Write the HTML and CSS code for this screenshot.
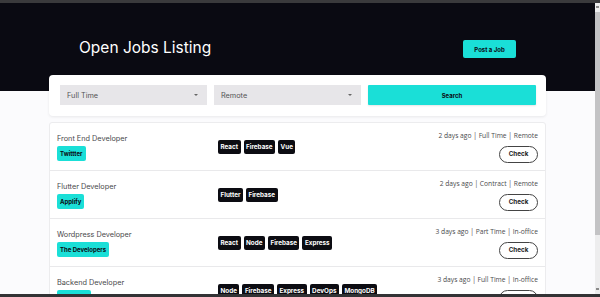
FILE: index.html
```
<!DOCTYPE html>
<html lang="en">
<head>
    <meta charset="UTF-8">
    <meta name="viewport" content="width=device-width, initial-scale=1.0">
    <title>Open Jobs Listing</title>
    <link rel="stylesheet" href="styles.css">
</head>
<body>
    <div class="topbar"></div>
    <div class="window">
        <div class="page">
            <header class="hero">
                <div class="hero-inner">
                    <h1>Open Jobs Listing</h1>
                    <button class="btn-post">Post a Job</button>
                </div>
            </header>

            <main class="content">
                <form class="search-card">
                    <div class="select-wrap">
                        <select>
                            <option>Full Time</option>
                            <option>Part Time</option>
                            <option>Contract</option>
                        </select>
                    </div>
                    <div class="select-wrap">
                        <select>
                            <option>Remote</option>
                            <option>In-office</option>
                        </select>
                    </div>
                    <button type="button" class="btn-search">Search</button>
                </form>

                <ul class="job-list">
                    <li class="job">
                        <div class="job-info">
                            <div class="job-title">Front End Developer</div>
                            <span class="company">Twittter</span>
                        </div>
                        <div class="job-tags">
                            <span class="tag">React</span>
                            <span class="tag">Firebase</span>
                            <span class="tag">Vue</span>
                        </div>
                        <div class="job-meta">
                            <div class="meta-text">2 days ago | Full Time | Remote</div>
                            <button class="btn-check">Check</button>
                        </div>
                    </li>
                    <li class="job">
                        <div class="job-info">
                            <div class="job-title">Flutter Developer</div>
                            <span class="company">Applify</span>
                        </div>
                        <div class="job-tags">
                            <span class="tag">Flutter</span>
                            <span class="tag">Firebase</span>
                        </div>
                        <div class="job-meta">
                            <div class="meta-text">2 days ago | Contract | Remote</div>
                            <button class="btn-check">Check</button>
                        </div>
                    </li>
                    <li class="job">
                        <div class="job-info">
                            <div class="job-title">Wordpress Developer</div>
                            <span class="company">The Developers</span>
                        </div>
                        <div class="job-tags">
                            <span class="tag">React</span>
                            <span class="tag">Node</span>
                            <span class="tag">Firebase</span>
                            <span class="tag">Express</span>
                        </div>
                        <div class="job-meta">
                            <div class="meta-text">3 days ago | Part Time | In-office</div>
                            <button class="btn-check">Check</button>
                        </div>
                    </li>
                    <li class="job">
                        <div class="job-info">
                            <div class="job-title">Backend Developer</div>
                            <span class="company">Microsoft</span>
                        </div>
                        <div class="job-tags">
                            <span class="tag">Node</span>
                            <span class="tag">Firebase</span>
                            <span class="tag">Express</span>
                            <span class="tag">DevOps</span>
                            <span class="tag">MongoDB</span>
                        </div>
                        <div class="job-meta">
                            <div class="meta-text">3 days ago | Full Time | In-office</div>
                            <button class="btn-check">Check</button>
                        </div>
                    </li>
                </ul>
            </main>
        </div>
        <div class="scrollbar">
            <div class="scroll-arrow"></div>
            <div class="scroll-thumb"></div>
            <div class="scroll-track"></div>
            <div class="scroll-arrow"></div>
        </div>
    </div>
    <div class="bottombar"></div>
</body>
</html>
```

FILE: styles.css
```
* {
    box-sizing: border-box;
}
body {
    margin: 0;
    height: 297px;
    overflow: hidden;
    display: flex;
    flex-direction: column;
    font-family: Inter, "Liberation Sans", sans-serif;
    background-color: #3a3a3c;
}
.topbar {
    height: 3px;
    background-color: #3a3a3c;
}
.bottombar {
    height: 3px;
    background-color: #333335;
}
.window {
    flex: 1;
    display: flex;
    min-height: 0;
}
.page {
    flex: 1;
    overflow: hidden;
    background-color: #fbfbfd;
}

/* scrollbar look */
.scrollbar {
    width: 5px;
    display: flex;
    flex-direction: column;
    background-color: #ededee;
}
.scroll-arrow {
    height: 9px;
    position: relative;
}
.scroll-arrow::after {
    content: "";
    position: absolute;
    left: 1px;
    top: 3px;
    width: 3px;
    height: 2px;
    background-color: #8a8a8a;
}
.scroll-thumb {
    height: 223px;
    background-color: #c3c3c5;
}
.scroll-track {
    flex: 1;
}

/* header */
.hero {
    background-color: #0a0a12;
    padding: 35px 0 33px;
}
.hero-inner {
    width: 497px;
    margin: 0 auto;
    padding: 0 30px;
    display: flex;
    align-items: center;
    justify-content: space-between;
}
.hero h1 {
    margin: 0;
    font-size: 15.5px;
    line-height: 18px;
    font-weight: 400;
    color: #ffffff;
}
.btn-post {
    width: 53px;
    height: 18px;
    margin-top: 2px;
    border: none;
    border-radius: 2px;
    background-color: #1adfd7;
    color: #0a0a12;
    font-family: inherit;
    font-size: 6px;
    font-weight: 700;
    padding: 0;
}

/* search */
.content {
    width: 497px;
    margin: 0 auto;
}
.search-card {
    margin: -16px 0 0;
    background-color: #ffffff;
    border-radius: 4px;
    padding: 10px 10px 11px 11px;
    display: flex;
    gap: 7px;
    box-shadow: 0 1px 3px rgba(0,0,0,0.08);
}
.select-wrap {
    position: relative;
    width: 147px;
}
.select-wrap::after {
    content: "";
    position: absolute;
    right: 9px;
    top: 9px;
    border-left: 2px solid transparent;
    border-right: 2px solid transparent;
    border-top: 2px solid #666;
}
.select-wrap select {
    -webkit-appearance: none;
    appearance: none;
    display: block;
    width: 100%;
    height: 20px;
    border: none;
    border-radius: 0;
    background-color: #e7e6e9;
    color: #555;
    font-family: inherit;
    font-size: 7.3px;
    padding: 0 7px;
}
.btn-search {
    flex: 1;
    height: 20px;
    border: none;
    border-radius: 1px;
    background-color: #1adfd7;
    color: #0a0a12;
    font-family: inherit;
    font-size: 6px;
    font-weight: 700;
    box-shadow: 0 1px 2px rgba(0,0,0,0.1);
}

/* job list */
.job-list {
    list-style: none;
    margin: 6px 0 0;
    padding: 0;
    background-color: #ffffff;
    border: 1px solid #ececee;
    border-radius: 3px;
}
.job {
    display: grid;
    grid-template-columns: 161px 1fr auto;
    align-items: center;
    height: 48px;
    padding: 0 7px;
    border-bottom: 1px solid #e9e9eb;
}
.job-info {
    display: flex;
    flex-direction: column;
    align-items: flex-start;
    gap: 2px;
}
.job-title {
    font-size: 7.3px;
    line-height: 11px;
    color: #4a4a4c;
}
.company {
    display: inline-block;
    height: 15px;
    line-height: 15px;
    padding: 0 3px;
    border-radius: 2px;
    background-color: #1adfd7;
    color: #0a0a12;
    font-size: 6px;
    font-weight: 700;
}
.job-tags {
    display: flex;
    gap: 3px;
}
.tag {
    height: 14px;
    line-height: 14px;
    padding: 0 2.5px;
    border-radius: 2px;
    background-color: #0c0c12;
    color: #ffffff;
    font-size: 6.3px;
    font-weight: 700;
}
.job-meta {
    display: flex;
    flex-direction: column;
    align-items: flex-end;
    gap: 5px;
    padding-bottom: 1px;
}
.meta-text {
    font-family: "Open Sans", "Liberation Sans", sans-serif;
    font-size: 6.7px;
    line-height: 11px;
    color: #4a4a4c;
}
.btn-check {
    width: 39px;
    height: 17px;
    padding: 0;
    border: 1px solid #444;
    border-radius: 9px;
    background-color: #ffffff;
    color: #222;
    font-family: inherit;
    font-size: 6.3px;
    font-weight: 700;
}
```
